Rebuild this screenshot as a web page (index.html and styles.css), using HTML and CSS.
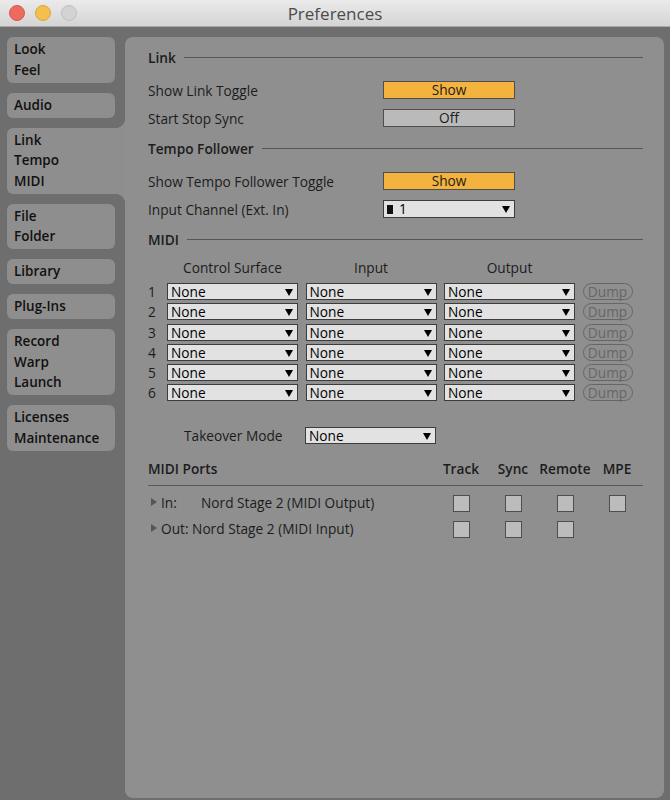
FILE: index.html
```html
<!DOCTYPE html>
<html lang="en">

<head>
    <meta charset="UTF-8">
    <title>Preferences</title>
    <link rel="stylesheet" href="styles.css">
</head>

<body>

    <div class="titlebar">
        <div class="lights">
            <span class="light red"></span>
            <span class="light yellow"></span>
            <span class="light grey"></span>
        </div>
        <div class="title">Preferences</div>
    </div>

    <div class="window">
        <!-- left tabs -->
        <div class="tabs">
            <div class="tab">Look<br>Feel</div>
            <div class="tab">Audio</div>
            <div class="tab active">Link<br>Tempo<br>MIDI</div>
            <div class="tab">File<br>Folder</div>
            <div class="tab">Library</div>
            <div class="tab">Plug-Ins</div>
            <div class="tab">Record<br>Warp<br>Launch</div>
            <div class="tab">Licenses<br>Maintenance</div>
        </div>

        <div class="panel">
            <div class="section-head first">Link</div>
            <div class="row">
                <div class="label">Show Link Toggle</div>
                <div class="button on">Show</div>
            </div>
            <div class="row">
                <div class="label">Start Stop Sync</div>
                <div class="button">Off</div>
            </div>

            <div class="section-head">Tempo Follower</div>
            <div class="row">
                <div class="label">Show Tempo Follower Toggle</div>
                <div class="button on">Show</div>
            </div>
            <div class="row">
                <div class="label">Input Channel (Ext. In)</div>
                <div class="select channel"><span class="chip"></span>1</div>
            </div>

            <div class="section-head">MIDI</div>
            <div class="midi-grid">
                <div></div>
                <div class="col-head">Control Surface</div>
                <div class="col-head">Input</div>
                <div class="col-head">Output</div>
                <div></div>
            </div>
            <div class="midi-grid rows" id="midi-rows"></div>

            <div class="takeover">
                <div class="takeover-label">Takeover Mode</div>
                <div class="select">None</div>
            </div>

            <div class="ports-head">
                <div class="ports-title">MIDI Ports</div>
                <div>Track</div>
                <div>Sync</div>
                <div>Remote</div>
                <div>MPE</div>
            </div>
            <div class="port">
                <div class="port-name"><span class="arrow"></span><span class="dir">In:</span>Nord Stage 2 (MIDI Output)</div>
                <div><span class="check"></span></div>
                <div><span class="check"></span></div>
                <div><span class="check"></span></div>
                <div><span class="check"></span></div>
            </div>
            <div class="port">
                <div class="port-name"><span class="arrow"></span>Out: Nord Stage 2 (MIDI Input)</div>
                <div><span class="check"></span></div>
                <div><span class="check"></span></div>
                <div><span class="check"></span></div>
                <div></div>
            </div>
        </div>
    </div>

    <script>
        // six identical control surface rows
        const rows = document.getElementById("midi-rows");
        for (let i = 1; i <= 6; i++) {
            rows.innerHTML +=
                `<div class="num">${i}</div>` +
                `<div class="select">None</div>` +
                `<div class="select">None</div>` +
                `<div class="select">None</div>` +
                `<div class="dump">Dump</div>`;
        }
    </script>
</body>

</html>
```

FILE: styles.css
```css
body {
    margin: 0;
    width: 670px;
    height: 800px;
    overflow: hidden;
    font-family: "Open Sans", "Liberation Sans", sans-serif;
    font-size: 13.7px;
    color: #1c1c1c;
    background: #6e6e6e;
}

/* title bar */
.titlebar {
    height: 26px;
    border-bottom: 1px solid #a8a8a8;
    background: linear-gradient(#ebebeb, #d4d4d4);
    display: flex;
    align-items: center;
    justify-content: center;
    position: relative;
}

.lights {
    position: absolute;
    left: 9px;
    top: 5px;
    display: flex;
    gap: 10px;
}

.light {
    width: 16px;
    height: 16px;
    border-radius: 50%;
    box-sizing: border-box;
}

.red {
    background: #ed6a5e;
    border: 1px solid #d65a4f;
}

.yellow {
    background: #f5bf4f;
    border: 1px solid #dca63c;
}

.grey {
    background: #d3d3d3;
    border: 1px solid #c0c0c0;
}

.title {
    font-size: 17px;
    color: #4b4b4b;
}

/* window */
.window {
    display: flex;
    gap: 10px;
    padding: 10px 6px 2px 7px;
    height: 761px;
}

.tabs {
    width: 108px;
    display: flex;
    flex-direction: column;
    gap: 10px;
}

.tab {
    background: #8e8e8e;
    border-radius: 6px;
    padding: 2px 7px 2.5px 7px;
    line-height: 20.5px;
    font-size: 13.5px;
    font-weight: 600;
    color: #111;
}

.tab.active {
    margin-right: -10px;
    border-radius: 6px 0 0 6px;
    position: relative;
}

/* small concave corners where the active tab meets the panel */
.tab.active::before,
.tab.active::after {
    content: "";
    position: absolute;
    right: 0;
    width: 10px;
    height: 10px;
}

.tab.active::before {
    top: -10px;
    background: radial-gradient(circle at 0 0, #6e6e6e 10px, #8e8e8e 10.5px);
}

.tab.active::after {
    bottom: -10px;
    background: radial-gradient(circle at 0 100%, #6e6e6e 10px, #8e8e8e 10.5px);
}

.panel {
    flex: 1;
    background: #8f8f8f;
    border-radius: 8px;
    padding: 11px 21px 0 23px;
}

/* headings with rule */
.section-head {
    display: flex;
    align-items: center;
    height: 18px;
    font-weight: 600;
    margin-top: 12px;
}

.section-head.first {
    margin-top: 0;
}

.section-head::after {
    content: "";
    flex: 1;
    border-top: 1px solid #565656;
    margin-left: 8px;
}

.row {
    display: flex;
    align-items: center;
    height: 18px;
    margin-top: 10px;
}

.section-head + .row {
    margin-top: 15px;
}

.label {
    width: 235px;
}

.button {
    width: 132px;
    height: 18px;
    box-sizing: border-box;
    border: 1px solid #4e4e4e;
    background: #bababa;
    text-align: center;
    line-height: 16px;
}

.button.on {
    background: #f3b33e;
}

.select {
    height: 17px;
    box-sizing: border-box;
    border: 1px solid #3c3c3c;
    background: #e2e2e2;
    line-height: 15px;
    padding-left: 3px;
    color: #000;
    position: relative;
}

.select::after {
    content: "";
    position: absolute;
    right: 4px;
    top: 5px;
    border-left: 4.5px solid transparent;
    border-right: 4.5px solid transparent;
    border-top: 7px solid #000;
}

.select.channel {
    width: 132px;
    height: 18px;
    line-height: 16px;
    display: flex;
    align-items: center;
    gap: 6px;
}

.chip {
    width: 6px;
    height: 9px;
    background: #111;
}

/* midi table */
.midi-grid {
    display: grid;
    grid-template-columns: 11.5px 131px 131px 131px 50px;
    column-gap: 7.5px;
    margin-top: 11px;
    line-height: 18px;
}

.midi-grid.rows {
    margin-top: 6px;
    row-gap: 3.3px;
}

.col-head {
    text-align: center;
}

.num {
    line-height: 17px;
}

.dump {
    height: 17px;
    box-sizing: border-box;
    border: 1px solid #666;
    border-radius: 9px;
    text-align: center;
    line-height: 15px;
    color: #666;
}

.takeover {
    display: flex;
    align-items: center;
    margin-top: 25px;
    padding-left: 36px;
}

.takeover-label {
    width: 121px;
}

.takeover .select {
    width: 131px;
}

/* midi ports */
.ports-head,
.port {
    display: grid;
    grid-template-columns: 287px 52px 52px 52px 52px;
    align-items: center;
    text-align: center;
}

.ports-head {
    margin-top: 15px;
    line-height: 18px;
    padding-bottom: 7px;
    border-bottom: 1px solid #5a5a5a;
    font-weight: 600;
}

.ports-title {
    text-align: left;
}

.port {
    height: 16px;
    margin-top: 10px;
}

.ports-head + .port {
    margin-top: 6px;
}

.port-name {
    text-align: left;
    display: flex;
    align-items: center;
}

.arrow {
    width: 0;
    height: 0;
    margin: 0 4px 0 3px;
    border-top: 4px solid transparent;
    border-bottom: 4px solid transparent;
    border-left: 6px solid #555;
}

.dir {
    width: 40px;
}

.check {
    display: inline-block;
    width: 17px;
    height: 17px;
    box-sizing: border-box;
    border: 1px solid #4e4e4e;
    background: #bcbcbc;
    vertical-align: middle;
}
```
